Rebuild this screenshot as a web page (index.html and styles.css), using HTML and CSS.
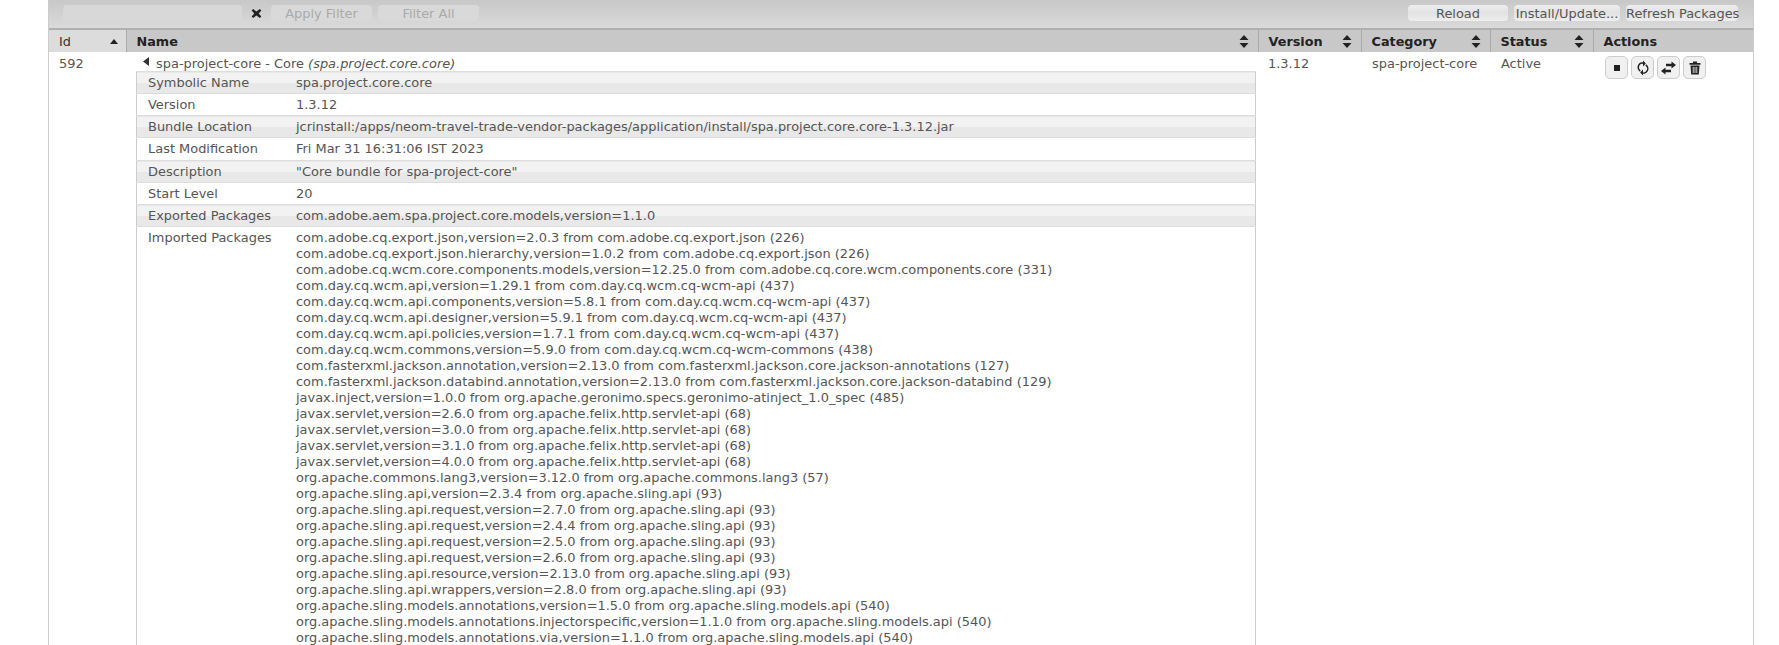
FILE: index.html
```html
<!DOCTYPE html>
<html lang="en">
<head>
<meta charset="utf-8">
<title>Bundles</title>
<link rel="stylesheet" href="styles.css">
</head>
<body>
<main class="panel">
  <div class="toolbar">
    <input class="filter" type="text" aria-label="Filter">
    <span class="clear" aria-hidden="true"><svg width="11" height="11" viewBox="0 0 11 11"><path d="M2.2 1 5.500 3.600 8.800 1 10.400 2.600 7.700 5.500 10.400 8.400 8.800 10 5.500 7.400 2.200 10 .6 8.400 3.300 5.500 .6 2.600Z"/></svg></span>
    <button class="btn dim btn-filter">Apply Filter</button>
    <button class="btn dim btn-filter">Filter All</button>
    <span class="spacer"></span>
    <button class="btn btn-reload">Reload</button>
    <button class="btn btn-install">Install/Update...</button>
    <button class="btn btn-refresh">Refresh Packages</button>
  </div>
  <table class="bundles">
    <thead>
      <tr>
        <th class="col-id id-head">Id<svg class="sort" width="8" height="5" viewBox="0 0 8 5"><path d="M4 0 8 5H0Z"/></svg></th>
        <th class="col-name">Name<svg class="sort both" width="10" height="13" viewBox="0 0 10 13"><path d="M5 0 9.500 5H.5ZM5 13 .5 8H9.500Z"/></svg></th>
        <th class="col-ver">Version<svg class="sort both" width="10" height="13" viewBox="0 0 10 13"><path d="M5 0 9.500 5H.5ZM5 13 .5 8H9.500Z"/></svg></th>
        <th class="col-cat">Category<svg class="sort both" width="10" height="13" viewBox="0 0 10 13"><path d="M5 0 9.500 5H.5ZM5 13 .5 8H9.500Z"/></svg></th>
        <th class="col-status">Status<svg class="sort both" width="10" height="13" viewBox="0 0 10 13"><path d="M5 0 9.500 5H.5ZM5 13 .5 8H9.500Z"/></svg></th>
        <th class="col-act">Actions</th>
      </tr>
    </thead>
    <tbody>
      <tr>
        <td>592</td>
        <td class="name-cell">
          <div class="title"><svg class="caret" width="6" height="9" viewBox="0 0 6 9"><path d="M6 0V9L0 4.500Z"/></svg>spa-project-core - Core <i>(spa.project.core.core)</i></div>
          <table class="details">
            <tr class="alt"><th>Symbolic Name</th><td>spa.project.core.core</td></tr>
            <tr><th>Version</th><td>1.3.12</td></tr>
            <tr class="alt"><th>Bundle Location</th><td>jcrinstall:/apps/neom-travel-trade-vendor-packages/application/install/spa.project.core.core-1.3.12.jar</td></tr>
            <tr class="tall"><th>Last Modification</th><td>Fri Mar 31 16:31:06 IST 2023</td></tr>
            <tr class="alt"><th>Description</th><td>"Core bundle for spa-project-core"</td></tr>
            <tr><th>Start Level</th><td>20</td></tr>
            <tr class="alt"><th>Exported Packages</th><td>com.adobe.aem.spa.project.core.models,version=1.1.0</td></tr>
            <tr><th>Imported Packages</th><td>com.adobe.cq.export.json,version=2.0.3 from com.adobe.cq.export.json (226)<br>
com.adobe.cq.export.json.hierarchy,version=1.0.2 from com.adobe.cq.export.json (226)<br>
com.adobe.cq.wcm.core.components.models,version=12.25.0 from com.adobe.cq.core.wcm.components.core (331)<br>
com.day.cq.wcm.api,version=1.29.1 from com.day.cq.wcm.cq-wcm-api (437)<br>
com.day.cq.wcm.api.components,version=5.8.1 from com.day.cq.wcm.cq-wcm-api (437)<br>
com.day.cq.wcm.api.designer,version=5.9.1 from com.day.cq.wcm.cq-wcm-api (437)<br>
com.day.cq.wcm.api.policies,version=1.7.1 from com.day.cq.wcm.cq-wcm-api (437)<br>
com.day.cq.wcm.commons,version=5.9.0 from com.day.cq.wcm.cq-wcm-commons (438)<br>
com.fasterxml.jackson.annotation,version=2.13.0 from com.fasterxml.jackson.core.jackson-annotations (127)<br>
com.fasterxml.jackson.databind.annotation,version=2.13.0 from com.fasterxml.jackson.core.jackson-databind (129)<br>
javax.inject,version=1.0.0 from org.apache.geronimo.specs.geronimo-atinject_1.0_spec (485)<br>
javax.servlet,version=2.6.0 from org.apache.felix.http.servlet-api (68)<br>
javax.servlet,version=3.0.0 from org.apache.felix.http.servlet-api (68)<br>
javax.servlet,version=3.1.0 from org.apache.felix.http.servlet-api (68)<br>
javax.servlet,version=4.0.0 from org.apache.felix.http.servlet-api (68)<br>
org.apache.commons.lang3,version=3.12.0 from org.apache.commons.lang3 (57)<br>
org.apache.sling.api,version=2.3.4 from org.apache.sling.api (93)<br>
org.apache.sling.api.request,version=2.7.0 from org.apache.sling.api (93)<br>
org.apache.sling.api.request,version=2.4.4 from org.apache.sling.api (93)<br>
org.apache.sling.api.request,version=2.5.0 from org.apache.sling.api (93)<br>
org.apache.sling.api.request,version=2.6.0 from org.apache.sling.api (93)<br>
org.apache.sling.api.resource,version=2.13.0 from org.apache.sling.api (93)<br>
org.apache.sling.api.wrappers,version=2.8.0 from org.apache.sling.api (93)<br>
org.apache.sling.models.annotations,version=1.5.0 from org.apache.sling.models.api (540)<br>
org.apache.sling.models.annotations.injectorspecific,version=1.1.0 from org.apache.sling.models.api (540)<br>
org.apache.sling.models.annotations.via,version=1.1.0 from org.apache.sling.models.api (540)</td></tr>
          </table>
        </td>
        <td>1.3.12</td>
        <td class="shifted">spa-project-core</td>
        <td class="shifted">Active</td>
        <td class="act-cell">
          <div class="actions">
            <button class="icon-btn" aria-label="Stop"><svg width="12" height="12" viewBox="0 0 12 12"><rect x="3" y="3" width="6" height="6"/></svg></button>
            <button class="icon-btn" aria-label="Refresh"><svg width="14" height="16" viewBox="0 0 14 16"><path class="line" d="M8.800 3.600A4.300 4.300 0 0 0 4.300 11M5.200 12.400A4.300 4.300 0 0 0 9.700 5"/><path d="M7 .5V6.500L9.800 3.500ZM7 15.500V9.500L4.200 12.500Z"/></svg></button>
            <button class="icon-btn" aria-label="Update"><svg width="15" height="14" viewBox="0 0 15 14"><path d="M5 5.200V2.800H10.500V.4L15 4 10.500 7.600V5.200ZM10 8.800V11.200H4.500V13.600L0 10 4.500 6.400V8.800Z"/></svg></button>
            <button class="icon-btn" aria-label="Uninstall"><svg width="12" height="14" viewBox="0 0 12 14"><path d="M4 .5H8V2H11.500V3.800H.5V2H4ZM1.500 4.500H10.500L9.800 13.500H2.200ZM3.800 6V12H4.600V6ZM5.600 6V12H6.400V6ZM7.400 6V12H8.200V6Z"/></svg></button>
          </div>
        </td>
      </tr>
    </tbody>
  </table>
</main>
</body>
</html>
```
FILE: styles.css
```css
html, body {
  margin: 0;
  height: 645px;
  overflow: hidden;
  background: #fff;
}
body {
  font-family: "DejaVu Sans", Verdana, sans-serif;
  font-size: 12.94px;
  color: #555;
}
.panel {
  margin: 0 25px 0 48px;
  border-left: 1px solid #ccc;
  border-right: 1px solid #ccc;
  height: 645px;
}
.toolbar {
  display: flex;
  align-items: center;
  box-sizing: border-box;
  height: 30px;
  padding: 0 15px 2px 14px;
  border-bottom: 2px solid #b0b0b0;
  background: linear-gradient(#c8c8c8, #dadada);
}
.filter {
  width: 179px;
  height: 16px;
  padding: 0;
  border: 0;
  border-radius: 4px;
  background: #d8d8d8;
}
.clear {
  display: flex;
  width: 29px;
  justify-content: center;
}
.btn {
  box-sizing: border-box;
  height: 16px;
  padding: 2px 0 0;
  border: 0;
  border-radius: 4px;
  background: linear-gradient(#eee, #e2e2e2 50%, #eee);
  font: inherit;
  line-height: 14px;
  color: #555;
  white-space: nowrap;
}
.dim {
  background: #d9d9d9;
  color: #aaa;
}
.btn-filter { width: 101px; margin-right: 6px; }
.btn-reload { width: 100px; }
.btn-install { width: 106px; margin-left: 6px; }
.btn-refresh { width: 112px; margin-left: 6px; }
.spacer { flex: 1; }
.bundles {
  width: 100%;
  table-layout: fixed;
  border-collapse: collapse;
}
.bundles > thead th {
  box-sizing: border-box;
  height: 22px;
  padding: 0 0 0 10px;
  position: relative;
  text-align: left;
  font-size: 12.8px;
  color: #222;
  background: #c8c8c8;
  border-left: 1px solid #aaa;
}
.bundles > thead th:first-child { border-left: 0; }
.bundles > thead .id-head {
  font-weight: normal;
  background: #dcdcdc;
  color: #333;
}
.col-id { width: 77px; }
.col-ver { width: 103px; }
.col-cat { width: 129px; }
.col-status { width: 103px; }
.col-act { width: 160px; }
.sort {
  position: absolute;
  right: 9px;
  top: 5px;
}
.id-head .sort { top: 9px; right: 8px; }
.bundles > tbody > tr > td {
  box-sizing: border-box;
  padding: 4px 0 0 10px;
  vertical-align: top;
  line-height: 16px;
}
.bundles > tbody > tr > td.shifted { padding-left: 11px; }
.title {
  height: 15px;
  padding-left: 7px;
}
.caret { margin: 0 7px 2px 0; }
.bundles > tbody > tr > td.name-cell { padding-right: 2px; }
.details {
  width: 100%;
  border-collapse: collapse;
  border: 1px solid #ccc;
}
.details tr { border-top: 1px solid #ddd; }
.details tr.alt { background: linear-gradient(#f2f2f2 50%, #e8e8e8 50%); }
.details th, .details td {
  box-sizing: content-box;
  padding: 3px 0 2px 11px;
  line-height: 16px;
  font-weight: normal;
  text-align: left;
  vertical-align: top;
}
.details .tall th, .details .tall td { padding-bottom: 3px; }
.details th { width: 137px; }
.bundles > tbody > tr > td.act-cell { padding: 3px 0 0 12px; }
.actions { display: flex; gap: 3px; margin-top: 1px; }
.icon-btn {
  display: flex;
  align-items: center;
  justify-content: center;
  box-sizing: border-box;
  width: 23px;
  height: 23px;
  padding: 0;
  border: 1px solid #ccc;
  border-radius: 5px;
  background: #f0f0f0;
}
svg { fill: #222; display: inline-block; }
.line { fill: none; stroke: #222; stroke-width: 1.5; }
.caret { fill: #333; }
```
